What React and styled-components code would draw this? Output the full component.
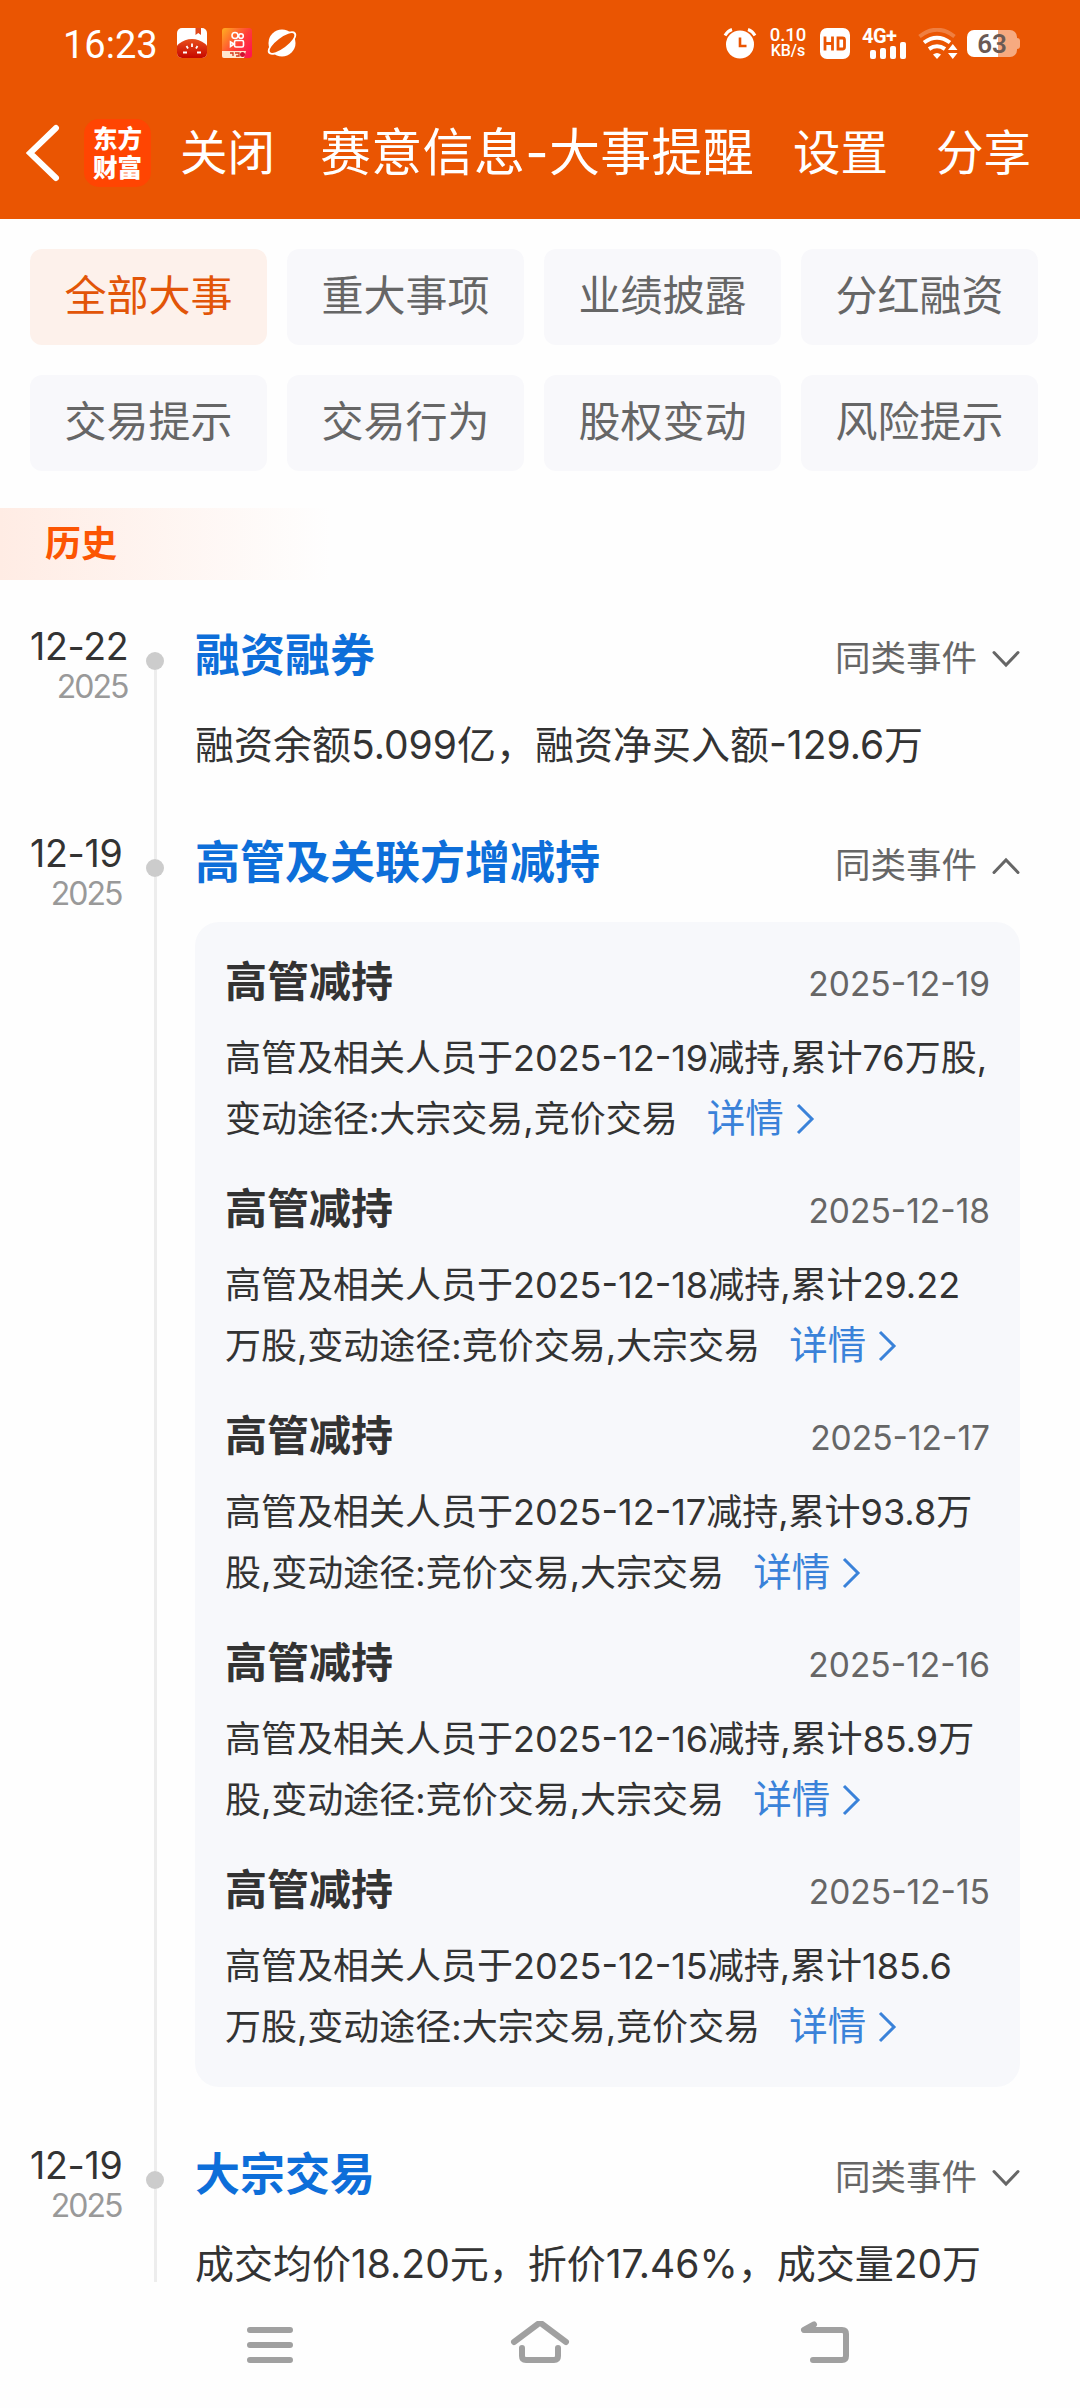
import styled, { createGlobalStyle } from "styled-components";

const GlobalStyle = createGlobalStyle`
  * {
    box-sizing: border-box;
  }
  body {
    margin: 0;
    background-color: #fefefe;
    font-family: Inter, "Noto Sans CJK SC", sans-serif;
    color: #333;
  }
`;

const Screen = styled.div`
  width: 1080px;
  height: 2408px;
  display: flex;
  flex-direction: column;
  overflow: hidden;
  white-space: nowrap;
`;

const TopArea = styled.header`
  height: 219px;
  flex: none;
  background-color: #ea5502;
  color: #fff;
`;

const StatusBar = styled.div`
  height: 86px;
  padding: 0 60px 0 63px;
  display: flex;
  align-items: center;
`;

const Clock = styled.span`
  width: 114px;
  font-family: Roboto, sans-serif;
  font-size: 38px;
  line-height: 44px;
  padding-top: 3px;
`;

const AppIcons = styled.div`
  display: flex;
  gap: 15px;
  margin-right: auto;
`;

const NetSpeed = styled.div`
  width: 36px;
  margin: 0 14px 0 13px;
  display: flex;
  flex-direction: column;
  align-items: center;
  font-family: Roboto, sans-serif;
  font-weight: 500;
  line-height: 16px;
`;

const NetValue = styled.span`
  font-size: 18.5px;
`;

const NetUnit = styled.span`
  font-size: 16px;
`;

const Signal = styled.div`
  width: 44px;
  height: 31px;
  margin: 0 12px;
  display: flex;
  flex-direction: column;
`;

const SignalLabel = styled.span`
  font-family: Roboto, sans-serif;
  font-weight: 700;
  font-size: 20px;
  line-height: 16px;
  letter-spacing: -0.5px;
`;

const SignalBars = styled.div`
  display: flex;
  align-items: flex-end;
  justify-content: flex-end;
  gap: 4px;
  margin-top: -2px;
`;

const Bar = styled.span`
  width: 6px;
  height: ${(props) => props.$height}px;
  border-radius: 2px;
  background-color: #fff;
`;

const BatteryWrapper = styled.div`
  display: flex;
  align-items: center;
  margin-left: 9px;
`;

const Battery = styled.div`
  width: 50px;
  height: 27px;
  border-radius: 7px;
  background: linear-gradient(90deg, #fff 63%, #f6aa80 63%);
  color: #6a5a55;
  font-family: Roboto, sans-serif;
  font-weight: 600;
  font-size: 26px;
  line-height: 28px;
  text-align: center;
`;

const BatteryTip = styled.span`
  width: 3px;
  height: 11px;
  border-radius: 0 3px 3px 0;
  background-color: #f6aa80;
`;

const TitleBar = styled.div`
  height: 133px;
  padding: 0 49px 0 26px;
  display: flex;
  align-items: center;
`;

const Logo = styled.div`
  width: 67px;
  height: 68px;
  margin: 0 29px 0 24px;
  padding-top: 4px;
  border-radius: 15px;
  background-color: #ff4502;
  font-family: "Noto Sans CJK SC", sans-serif;
  font-weight: 900;
  font-size: 24.5px;
  line-height: 29px;
  text-align: center;
`;

const HeaderAction = styled.span`
  font-size: 47.5px;
  line-height: 60px;
`;

const Title = styled.h1`
  margin: 0 auto 0 45px;
  font-weight: 400;
  font-size: 51px;
  line-height: 60px;
  letter-spacing: 0.3px;
`;

const HeaderActions = styled.div`
  display: flex;
  gap: 48px;
`;

const Filters = styled.div`
  margin: 30px 42px 0 30px;
  display: grid;
  grid-template-columns: repeat(4, 237px);
  grid-auto-rows: 96px;
  gap: 30px 20px;
`;

const Filter = styled.button`
  border: none;
  padding: 0 0 9px;
  border-radius: 12px;
  font: inherit;
  font-size: 42px;
  color: ${(props) => (props.$active ? "#e25508" : "#666")};
  background-color: ${(props) => (props.$active ? "#fdf1eb" : "#f8f8fb")};
`;

const SectionLabel = styled.h2`
  margin: 37px 0 0;
  width: 330px;
  height: 72px;
  flex: none;
  padding-left: 45px;
  background: linear-gradient(90deg, #ffece4, #fefefe);
  color: #fc5503;
  font-weight: 700;
  font-size: 36px;
  line-height: 72px;
`;

const Timeline = styled.div`
  flex: 1;
  min-height: 0;
  padding: 43px 60px 0 30px;
`;

const Event = styled.section`
  height: ${(props) => props.$height}px;
  display: flex;
`;

const DateColumn = styled.div`
  width: 116px;
  flex: none;
`;

const DateBlock = styled.div`
  width: max-content;
  padding-top: 1px;
  text-align: right;
`;

const Day = styled.div`
  font-size: 37.5px;
  line-height: 46px;
  letter-spacing: -0.3px;
`;

const Year = styled.div`
  font-size: 32px;
  line-height: 34px;
  letter-spacing: -2px;
  padding-right: 1px;
  color: #999;
`;

const Rail = styled.div`
  width: 18px;
  flex: none;
  margin: 29px 31px 0 0;
  display: flex;
  flex-direction: column;
  align-items: center;
`;

const Dot = styled.span`
  width: 18px;
  height: 18px;
  flex: none;
  border-radius: 50%;
  background-color: #ccc;
`;

const RailLine = styled.span`
  width: 3px;
  flex: 1;
  margin: 0 0 -29px 1px;
  background-color: #ededed;
`;

const EventBody = styled.div`
  flex: 1;
  min-width: 0;
`;

const EventHeader = styled.div`
  height: 62px;
  display: flex;
  align-items: center;
  justify-content: space-between;
`;

const EventTitle = styled.h3`
  margin: 0;
  padding-top: 4px;
  font-weight: 700;
  font-size: 45px;
  line-height: 62px;
  color: #0d6ed9;
`;

const Similar = styled.div`
  display: flex;
  align-items: center;
  gap: 15px;
  padding-top: 9px;
  font-size: 35.5px;
  line-height: 50px;
  color: #666;
`;

const Summary = styled.p`
  margin: 32px 0 0;
  font-size: 39px;
  line-height: 56px;
`;

const Card = styled.div`
  margin-top: 30px;
  height: 1165px;
  padding: 30px 30px 0;
  border-radius: 24px;
  background-color: #f7f8fb;
`;

const Record = styled.div`
  height: 227px;
`;

const RecordHeader = styled.div`
  height: 60px;
  display: flex;
  align-items: center;
  justify-content: space-between;
`;

const RecordTitle = styled.h4`
  margin: 0;
  font-weight: 700;
  font-size: 42px;
  line-height: 60px;
`;

const RecordDate = styled.span`
  padding-top: 4px;
  font-size: 33.5px;
  color: #666;
`;

const RecordText = styled.p`
  margin: 16px 0 0;
  font-size: 36px;
  line-height: 61px;
`;

const Detail = styled.a`
  margin-left: 29px;
  font-size: 38.5px;
  line-height: 50px;
  color: #3a82d9;

  svg {
    margin-left: 11px;
    vertical-align: -3px;
  }
`;

const NavBar = styled.nav`
  height: 126px;
  flex: none;
  display: flex;
  align-items: center;
  padding-left: 244px;
`;

const HomeIcon = styled.svg`
  margin: 0 228px 0 214px;
`;

const filters = [
  "全部大事",
  "重大事项",
  "业绩披露",
  "分红融资",
  "交易提示",
  "交易行为",
  "股权变动",
  "风险提示",
];

const records = [
  { date: "2025-12-19", lines: ["高管及相关人员于2025-12-19减持,累计76万股,", "变动途径:大宗交易,竞价交易"] },
  { date: "2025-12-18", lines: ["高管及相关人员于2025-12-18减持,累计29.22", "万股,变动途径:竞价交易,大宗交易"] },
  { date: "2025-12-17", lines: ["高管及相关人员于2025-12-17减持,累计93.8万", "股,变动途径:竞价交易,大宗交易"] },
  { date: "2025-12-16", lines: ["高管及相关人员于2025-12-16减持,累计85.9万", "股,变动途径:竞价交易,大宗交易"] },
  { date: "2025-12-15", lines: ["高管及相关人员于2025-12-15减持,累计185.6", "万股,变动途径:大宗交易,竞价交易"] },
];

const events = [
  { day: "12-22", title: "融资融券", height: 207, summary: "融资余额5.099亿，融资净买入额-129.6万" },
  { day: "12-19", title: "高管及关联方增减持", height: 1312, records },
  { day: "12-19", title: "大宗交易", height: 111, summary: "成交均价18.20元，折价17.46%，成交量20万" },
];

function TomatoIcon() {
  return (
    <svg width="30" height="30" viewBox="0 0 30 30">
      <defs>
        <linearGradient id="tomato" x1="0" y1="0" x2="0" y2="1">
          <stop offset="0" stopColor="#e8501c" />
          <stop offset="0.6" stopColor="#c80a00" />
        </linearGradient>
        <clipPath id="tomatoClip">
          <rect width="30" height="30" rx="5" />
        </clipPath>
      </defs>
      <g clipPath="url(#tomatoClip)">
        <rect width="30" height="30" fill="#fff" />
        <path d="M18.5 0h5.500v7l-2.700-2-2.800 2z" fill="#e0481a" />
        <ellipse cx="15" cy="26" rx="18" ry="15" fill="url(#tomato)" />
        <path d="M15 15.500v3.500M9.500 18l1.500 2.500M20.500 18L19 20.500M6 24.500h4M20 24.500h4" stroke="#fff" strokeWidth="1.800" />
      </g>
    </svg>
  );
}

function VideoIcon() {
  return (
    <svg width="30" height="30" viewBox="0 0 30 30">
      <defs>
        <linearGradient id="video" x1="0" y1="0" x2="1" y2="0.8">
          <stop offset="0" stopColor="#ffb020" />
          <stop offset="0.6" stopColor="#ff3d38" />
          <stop offset="1" stopColor="#ff1650" />
        </linearGradient>
      </defs>
      <rect width="30" height="30" rx="3" fill="url(#video)" />
      <g fill="none" stroke="#fff" strokeWidth="1.6">
        <circle cx="13" cy="7.500" r="3" />
        <circle cx="19" cy="8" r="2.300" />
        <rect x="12.500" y="12.500" width="9" height="6.500" rx="1.500" />
        <path d="M12 16l-3.500-2v4.500z" />
      </g>
      <path d="M0 23h24l-2 7H2a2 2 0 0 1-2-2z" fill="#ffe9cf" />
      <path d="M8 25h3v3M13 25h4v3h-3" stroke="#d33a1c" strokeWidth="1.3" fill="none" />
      <circle cx="20.500" cy="26.500" r="2.500" fill="#d01030" />
    </svg>
  );
}

function PlanetIcon() {
  return (
    <svg width="30" height="30" viewBox="0 0 30 30">
      <circle cx="15" cy="15" r="13.500" fill="#fff" />
      <ellipse cx="15" cy="15" rx="17" ry="7" transform="rotate(-37 15 15)" fill="#fff" />
      <ellipse cx="15" cy="15" rx="15" ry="5" transform="rotate(-37 15 15)" fill="#ea5502" />
    </svg>
  );
}

function AlarmIcon() {
  return (
    <svg width="34" height="31" viewBox="0 0 34 31">
      <circle cx="17" cy="16.500" r="14" fill="#fff" />
      <path d="M2 7.500Q4.500 3 9 1.500M32 7.500Q29.500 3 25 1.500" stroke="#fff" strokeWidth="3" fill="none" />
      <path d="M17 9.500v8.500h6.500" stroke="#ea5502" strokeWidth="2.6" fill="none" />
    </svg>
  );
}

function HdIcon() {
  return (
    <svg width="30" height="31" viewBox="0 0 30 31">
      <rect width="30" height="31" rx="7" fill="#fff" />
      <path
        d="M5 8.500v14M12.500 8.500v14M5 15.500h7.500M18 10h4.500a2 2 0 0 1 2 2v7a2 2 0 0 1-2 2H18z"
        stroke="#ea5502"
        strokeWidth="2.8"
        fill="none"
      />
    </svg>
  );
}

function WifiIcon() {
  return (
    <svg width="40" height="31" viewBox="0 0 40 31">
      <g fill="none" stroke="#fff">
        <path d="M1.500 8.500Q19 -5 36.500 8.500" strokeWidth="4" opacity="0.25" />
        <path d="M6 14.500Q19 5 32 14.500" strokeWidth="4" />
        <path d="M11 21Q19 15.500 27 21" strokeWidth="4" />
      </g>
      <path d="M15 26.500q4-3 8 0L19 31z" fill="#fff" />
      <path d="M30 22h9.500l-4.700-6zM30 25h9.500l-4.700 6z" fill="#fff" />
    </svg>
  );
}

function Chevron({ up }) {
  return (
    <svg width="28" height="18" viewBox="0 0 28 18">
      <path
        d={up ? "M2 15.500L14 3L26 15.500" : "M2 2.500L14 15L26 2.500"}
        stroke="#666"
        strokeWidth="3"
        strokeLinecap="round"
        fill="none"
      />
    </svg>
  );
}

function EventItem({ event }) {
  return (
    <Event $height={event.height}>
      <DateColumn>
        <DateBlock>
          <Day>{event.day}</Day>
          <Year>2025</Year>
        </DateBlock>
      </DateColumn>
      <Rail>
        <Dot />
        <RailLine />
      </Rail>
      <EventBody>
        <EventHeader>
          <EventTitle>{event.title}</EventTitle>
          <Similar>
            同类事件
            <Chevron up={Boolean(event.records)} />
          </Similar>
        </EventHeader>
        {event.summary && <Summary>{event.summary}</Summary>}
        {event.records && (
          <Card>
            {event.records.map((record) => (
              <Record key={record.date}>
                <RecordHeader>
                  <RecordTitle>高管减持</RecordTitle>
                  <RecordDate>{record.date}</RecordDate>
                </RecordHeader>
                <RecordText>
                  {record.lines[0]}
                  <br />
                  {record.lines[1]}
                  <Detail>
                    详情
                    <svg width="20" height="32" viewBox="0 0 20 32">
                      <path d="M3 2L17 16L3 30" stroke="#3a82d9" strokeWidth="3" fill="none" />
                    </svg>
                  </Detail>
                </RecordText>
              </Record>
            ))}
          </Card>
        )}
      </EventBody>
    </Event>
  );
}

function App() {
  return (
    <Screen>
      <GlobalStyle />
      <TopArea>
        <StatusBar>
          <Clock>16:23</Clock>
          <AppIcons>
            <TomatoIcon />
            <VideoIcon />
            <PlanetIcon />
          </AppIcons>
          <AlarmIcon />
          <NetSpeed>
            <NetValue>0.10</NetValue>
            <NetUnit>KB/s</NetUnit>
          </NetSpeed>
          <HdIcon />
          <Signal>
            <SignalLabel>4G+</SignalLabel>
            <SignalBars>
              <Bar $height={9} />
              <Bar $height={11} />
              <Bar $height={13} />
              <Bar $height={17} />
            </SignalBars>
          </Signal>
          <WifiIcon />
          <BatteryWrapper>
            <Battery>63</Battery>
            <BatteryTip />
          </BatteryWrapper>
        </StatusBar>
        <TitleBar>
          <svg width="34" height="58" viewBox="0 0 34 58">
            <path d="M30 4L4 29L30 54" stroke="#fff" strokeWidth="6" strokeLinecap="round" fill="none" />
          </svg>
          <Logo>
            东方
            <br />
            财富
          </Logo>
          <HeaderAction>关闭</HeaderAction>
          <Title>赛意信息-大事提醒</Title>
          <HeaderActions>
            <HeaderAction>设置</HeaderAction>
            <HeaderAction>分享</HeaderAction>
          </HeaderActions>
        </TitleBar>
      </TopArea>
      <Filters>
        {filters.map((name, index) => (
          <Filter key={name} $active={index === 0}>
            {name}
          </Filter>
        ))}
      </Filters>
      <SectionLabel>历史</SectionLabel>
      <Timeline>
        {events.map((event) => (
          <EventItem key={event.title} event={event} />
        ))}
      </Timeline>
      <NavBar>
        <svg width="52" height="44" viewBox="0 0 52 44">
          <path d="M6 7h40M6 22h40M6 37h40" stroke="#a0a0a0" strokeWidth="6" strokeLinecap="round" />
        </svg>
        <HomeIcon width="60" height="48" viewBox="0 0 60 48">
          <path
            d="M4 21L28 3Q30 1.500 32 3L56 21M12 27V35Q12 39 16 39H44Q48 39 48 35V27"
            stroke="#a0a0a0"
            strokeWidth="6"
            strokeLinecap="round"
            fill="none"
          />
        </HomeIcon>
        <svg width="54" height="48" viewBox="0 0 54 48">
          <path
            d="M16 3.500L6 9H44Q48 9 48 13V35Q48 39 44 39H15"
            stroke="#a0a0a0"
            strokeWidth="6"
            strokeLinecap="round"
            strokeLinejoin="round"
            fill="none"
          />
        </svg>
      </NavBar>
    </Screen>
  );
}

export default App;
